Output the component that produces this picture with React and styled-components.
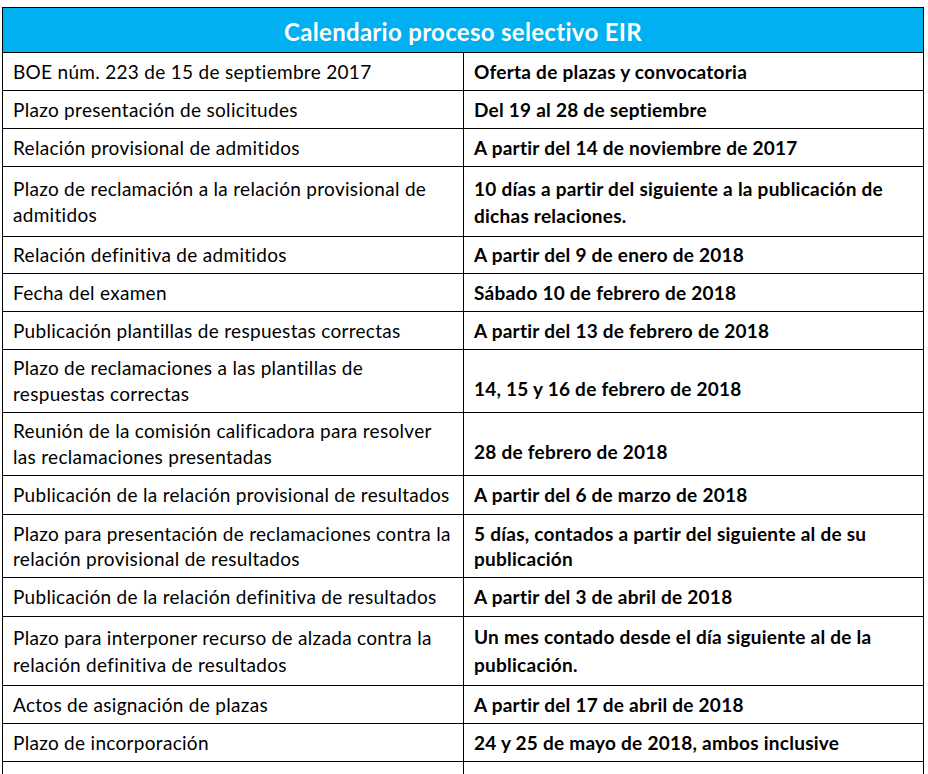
import React from "react";
import styled, { createGlobalStyle } from "styled-components";

const Global = createGlobalStyle`
  html, body { margin: 0; padding: 0; background: #ffffff; }
  body { font-family: Lato, "Open Sans", "Liberation Sans", sans-serif; color: #000; }
`;

const Page = styled.div`
  padding: 7px 0 0 2px;
`;

const Table = styled.div`
  width: 922px;
  box-sizing: border-box;
  border-top: 1px solid #000;
  border-left: 1px solid #000;
`;

const Header = styled.div`
  height: 45px;
  box-sizing: border-box;
  background: #00b0f0;
  border-right: 1px solid #000;
  border-bottom: 1px solid #000;
  display: flex;
  align-items: center;
  justify-content: center;
  padding-top: 2px;
  color: #fff;
  font-weight: 700;
  font-size: 24px;
  letter-spacing: 0.3px;
`;

const Row = styled.div`
  display: grid;
  grid-template-columns: 461px 460px;
  height: ${(p) => p.$h}px;
`;

const Cell = styled.div`
  box-sizing: border-box;
  border-right: 1px solid #000;
  border-bottom: 1px solid #000;
  padding: ${(p) => (p.$bottom ? "0 10px 10px 10px" : "0 10px")};
  display: flex;
  flex-direction: column;
  justify-content: ${(p) => (p.$bottom ? "flex-end" : "center")};
  font-size: 19px;
  font-weight: ${(p) => (p.$bold ? 700 : 400)};
  letter-spacing: ${(p) => (p.$bold ? "0.25px" : "0.3px")};
  line-height: ${(p) => p.$lh || 26}px;
  white-space: nowrap;
  color: #000;
`;

const Line = styled.span`
  display: block;
`;

const rows = [
  { h: 38, l: ["BOE núm. 223 de 15 de septiembre 2017"], r: ["Oferta de plazas y convocatoria"] },
  { h: 38, l: ["Plazo presentación de solicitudes"], r: ["Del 19 al 28 de septiembre"] },
  { h: 38, l: ["Relación provisional de admitidos"], r: ["A partir del 14 de noviembre de 2017"] },
  {
    h: 70,
    l: ["Plazo de reclamación a la relación provisional de", "admitidos"],
    r: ["10 días a partir del siguiente a la publicación de", "dichas relaciones."],
    rlh: 27,
  },
  { h: 37, l: ["Relación definitiva de admitidos"], r: ["A partir del 9 de enero de 2018"] },
  { h: 38, l: ["Fecha del examen"], r: ["Sábado 10 de febrero de 2018"] },
  { h: 38, l: ["Publicación plantillas de respuestas correctas"], r: ["A partir del 13 de febrero de 2018"] },
  {
    h: 63,
    l: ["Plazo de reclamaciones a las plantillas de", "respuestas correctas"],
    r: ["14, 15 y 16 de febrero de 2018"],
    bottom: true,
  },
  {
    h: 63,
    l: ["Reunión de la comisión calificadora para resolver", "las reclamaciones presentadas"],
    r: ["28 de febrero de 2018"],
    bottom: true,
  },
  { h: 39, l: ["Publicación de la relación provisional de resultados"], r: ["A partir del 6 de marzo de 2018"] },
  {
    h: 63,
    l: ["Plazo para presentación de reclamaciones contra la", "relación provisional de resultados"],
    r: ["5 días, contados a partir del siguiente al de su", "publicación"],
    rlh: 25,
    llh: 25,
  },
  { h: 39, l: ["Publicación de la relación definitiva de resultados"], r: ["A partir del 3 de abril de 2018"] },
  {
    h: 69,
    l: ["Plazo para interponer recurso de alzada contra la", "relación definitiva de resultados"],
    r: ["Un mes contado desde el día siguiente al de la", "publicación."],
    llh: 27,
    rlh: 28,
  },
  { h: 38, l: ["Actos de asignación de plazas"], r: ["A partir del 17 de abril de 2018"] },
  { h: 38, l: ["Plazo de incorporación"], r: ["24 y 25 de mayo de 2018, ambos inclusive"] },
  { h: 38, l: [""], r: [""] },
];

export default function App() {
  return (
    <>
      <Global />
      <Page>
        <Table>
          <Header>Calendario proceso selectivo EIR</Header>
          {rows.map((row, i) => (
            <Row key={i} $h={row.h}>
              <Cell $lh={row.llh}>
                {row.l.map((t, j) => (
                  <Line key={j}>{t}</Line>
                ))}
              </Cell>
              <Cell $bold $bottom={row.bottom} $lh={row.rlh}>
                {row.r.map((t, j) => (
                  <Line key={j}>{t}</Line>
                ))}
              </Cell>
            </Row>
          ))}
        </Table>
      </Page>
    </>
  );
}
